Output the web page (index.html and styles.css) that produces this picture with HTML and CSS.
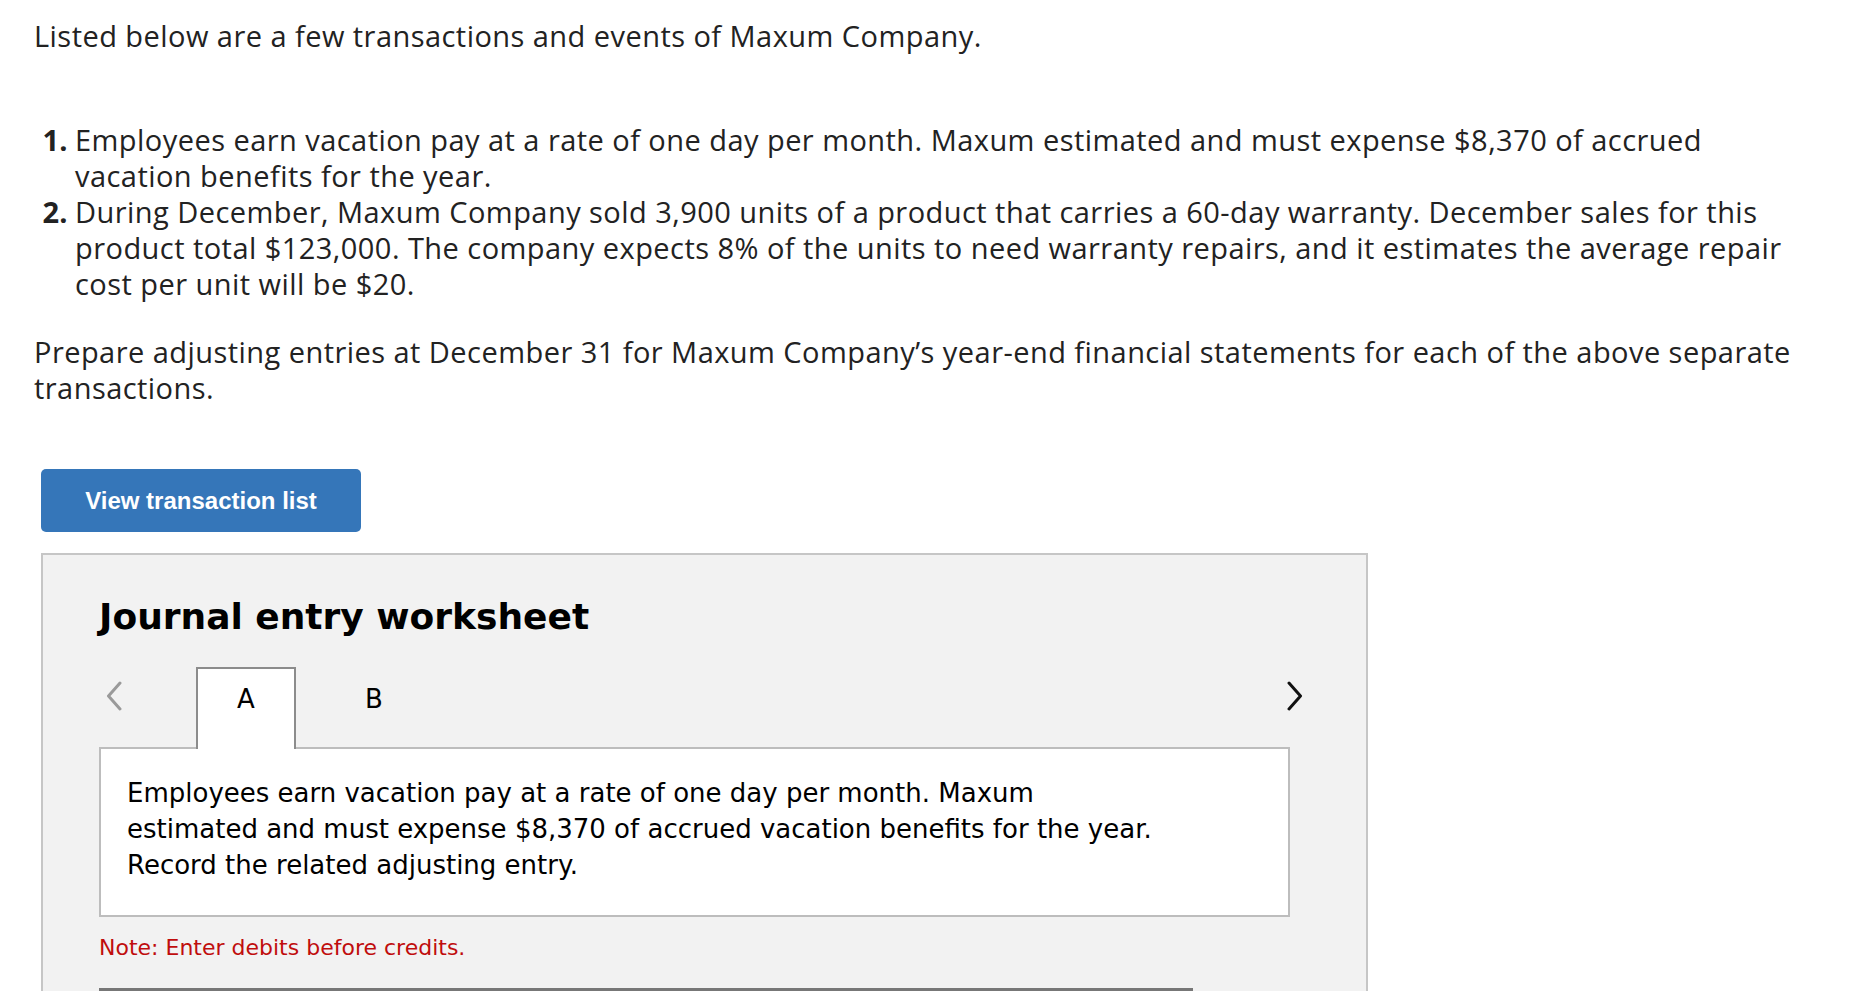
FILE: index.html
```html
<!DOCTYPE html>
<html lang="en">
<head>
<meta charset="utf-8">
<title>Maxum Company</title>
<link rel="stylesheet" href="styles.css">
</head>
<body>
<main class="page">
  <p class="intro">Listed below are a few transactions and events of Maxum Company.</p>
  <ol class="items">
    <li>Employees earn vacation pay at a rate of one day per month. Maxum estimated and must expense $8,370 of accrued vacation benefits for the year.</li>
    <li>During December, Maxum Company sold 3,900 units of a product that carries a 60-day warranty. December sales for this product total $123,000. The company expects 8% of the units to need warranty repairs, and it estimates the average repair cost per unit will be $20.</li>
  </ol>
  <p class="prompt">Prepare adjusting entries at December 31 for Maxum Company’s year-end financial statements for each of the above separate transactions.</p>

  <button class="btn-list" type="button">View transaction list</button>

  <section class="worksheet">
    <h2 class="ws-title">Journal entry worksheet</h2>
    <div class="tabrow">
      <button class="nav nav-prev" type="button" aria-label="Previous">
        <svg width="18" height="30" viewBox="0 0 18 30"><path d="M15 2 L3.5 15 L15 28" fill="none" stroke="#9a9a9a" stroke-width="3" stroke-linecap="round" stroke-linejoin="round"/></svg>
      </button>
      <div class="tab tab-active">A</div>
      <div class="tab">B</div>
      <button class="nav nav-next" type="button" aria-label="Next">
        <svg width="18" height="30" viewBox="0 0 18 30"><path d="M3 2 L14.5 15 L3 28" fill="none" stroke="#111" stroke-width="3" stroke-linecap="round" stroke-linejoin="round"/></svg>
      </button>
    </div>
    <div class="tab-panel">
      <p>Employees earn vacation pay at a rate of one day per month. Maxum estimated and must expense $8,370 of accrued vacation benefits for the year. Record the related adjusting entry.</p>
    </div>
    <p class="note">Note: Enter debits before credits.</p>
    <div class="table-top"></div>
  </section>
</main>
</body>
</html>
```
FILE: styles.css
```css
html, body {
  margin: 0;
  padding: 0;
  background: #fff;
}

body {
  font-family: "Open Sans", "Lato", sans-serif;
  color: #222;
  overflow: hidden;
}

.page {
  padding: 18px 0 0 34px;
}

.intro,
.items,
.prompt {
  box-sizing: border-box;
  font-size: 29px;
  line-height: 36px;
  max-width: 1776px;
  letter-spacing: 0.45px;
}

.intro {
  margin: 0;
}

.items {
  margin: 68px 0 0;
  padding-left: 41px;
}

.items li::marker {
  font-weight: 700;
  letter-spacing: 0;
}

.prompt {
  margin: 32px 0 0;
}

.btn-list {
  display: block;
  margin: 63px 0 0 7px;
  width: 320px;
  height: 63px;
  border: 0;
  border-radius: 5px;
  background: #3576b9;
  color: #fff;
  font-family: "Liberation Sans", Arial, sans-serif;
  font-weight: 700;
  font-size: 24px;
  padding: 0;
}

.worksheet {
  box-sizing: border-box;
  margin: 21px 0 0 7px;
  width: 1327px;
  border: 2px solid #c6c6c6;
  border-bottom: 0;
  background: #f2f2f2;
  padding: 40px 56px 0 56px;
  font-family: "DejaVu Sans", Verdana, sans-serif;
  color: #000;
  height: 600px;
}

.ws-title {
  margin: 0;
  font-size: 36px;
  line-height: 44px;
  font-weight: 700;
}

.tabrow {
  display: flex;
  align-items: stretch;
  height: 80px;
  margin-top: 28px;
  position: relative;
  z-index: 1;
}

.nav {
  border: 0;
  background: transparent;
  padding: 0;
  display: flex;
  align-items: flex-start;
  cursor: pointer;
}

.nav-prev {
  width: 97px;
  padding: 14px 0 0 6px;
}

.nav-next {
  margin-left: auto;
  padding: 14px 6px 0 0;
}

.tab {
  width: 100px;
  box-sizing: border-box;
  text-align: center;
  font-size: 26px;
  line-height: 30px;
  padding-top: 17px;
  margin-bottom: -2px;
}

.tab-active {
  background: #fff;
  border: 2px solid #8c8c8c;
  border-bottom: 0;
  padding-top: 15px;
}

.tab + .tab {
  margin-left: 28px;
}

.tab-panel {
  width: 1191px;
  box-sizing: border-box;
  height: 170px;
  background: #fff;
  border: 2px solid #bdbdbd;
  padding: 26px 0 0 26px;
}

.tab-panel p {
  margin: 0;
  max-width: 1036px;
  font-size: 26px;
  line-height: 36px;
}

.note {
  margin: 18px 0 0;
  font-size: 22px;
  line-height: 26px;
  color: #c00d0d;
}

.table-top {
  margin-top: 27px;
  width: 1094px;
  border-top: 3px solid #777;
}
```
